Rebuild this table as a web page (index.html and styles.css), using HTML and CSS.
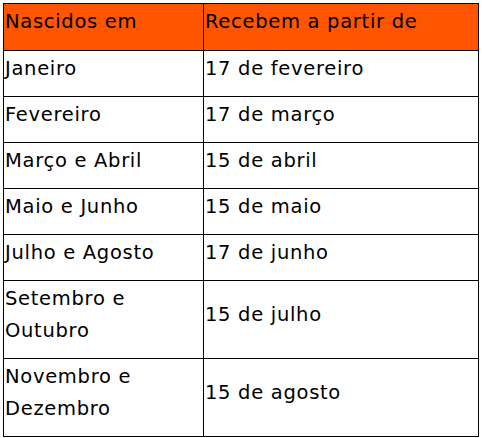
FILE: index.html
```html
<!DOCTYPE html>
<html lang="pt">
<head>
<meta charset="utf-8">
<link rel="stylesheet" href="styles.css">
</head>
<body>
<table class="tbl">
  <tr class="head"><th class="c1">Nascidos em</th><th class="c2">Recebem a partir de</th></tr>
  <tr><td class="c1">Janeiro</td><td class="c2">17 de fevereiro</td></tr>
  <tr><td class="c1">Fevereiro</td><td class="c2">17 de março</td></tr>
  <tr><td class="c1">Março e Abril</td><td class="c2">15 de abril</td></tr>
  <tr><td class="c1">Maio e Junho</td><td class="c2">15 de maio</td></tr>
  <tr><td class="c1">Julho e Agosto</td><td class="c2">17 de junho</td></tr>
  <tr><td class="c1">Setembro e<br>Outubro</td><td class="c2">15 de julho</td></tr>
  <tr><td class="c1">Novembro e<br>Dezembro</td><td class="c2">15 de agosto</td></tr>
</table>
</body>
</html>
```
FILE: styles.css
```css
html, body {
  margin: 0;
  padding: 0;
  background: #ffffff;
}
body {
  padding: 3px 0 0 3px;
}
.tbl {
  border-collapse: collapse;
  width: 476px;
  font-family: "DejaVu Sans", sans-serif;
  font-size: 19.5px;
  letter-spacing: 0.7px;
  color: #000;
}
.tbl th, .tbl td {
  border: 1px solid #000;
  padding: 2px 2px 11px 1px;
  line-height: 32px;
  text-align: left;
  font-weight: normal;
  vertical-align: middle;
}
.tbl .c1 {
  width: 196px;
  vertical-align: top;
}
.head th {
  background: #ff5400;
  padding-bottom: 12px;
}
```
